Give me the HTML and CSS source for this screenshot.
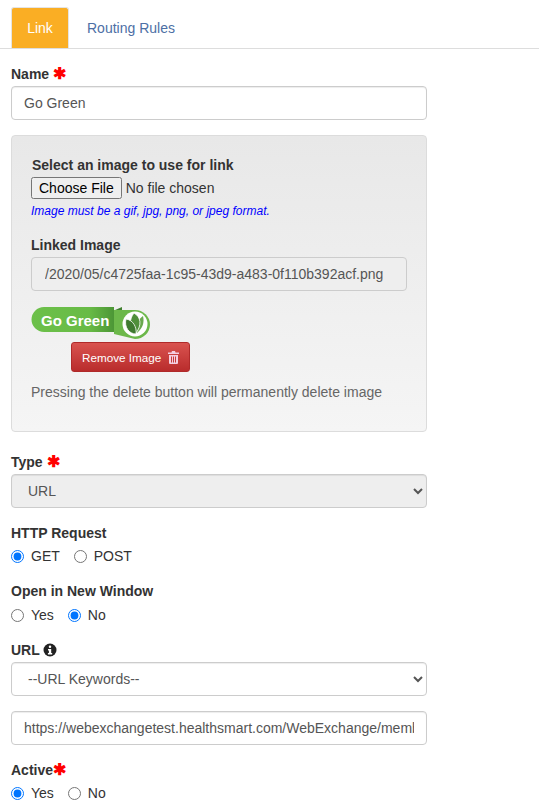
FILE: index.html
```html
<!DOCTYPE html>
<html lang="en">
<head>
<meta charset="utf-8">
<title>Link</title>
<link rel="stylesheet" href="styles.css">
</head>
<body>
<ul class="tabs">
  <li class="tab tab-active">Link</li>
  <li class="tab">Routing Rules</li>
</ul>
<form class="form">
  <div class="field field-name">
    <label class="label">Name <span class="req">✱</span></label>
    <input class="control" type="text" value="Go Green">
  </div>
  <div class="panel">
    <label class="label label-select">Select an image to use for link</label>
    <input class="file" type="file">
    <p class="hint">Image must be a gif, jpg, png, or jpeg format.</p>
    <label class="label label-linked">Linked Image</label>
    <input class="control control-path" type="text" readonly value="/2020/05/c4725faa-1c95-43d9-a483-0f110b392acf.png">
    <svg class="logo" width="120" height="36" viewBox="0 0 120 36" aria-label="Go Green logo">
      <defs>
        <linearGradient id="pill" x1="0" x2="1" y1="0" y2="0">
          <stop offset="0" stop-color="#6cc04a"/>
          <stop offset="0.7" stop-color="#68bb46"/>
          <stop offset="1" stop-color="#4c9636"/>
        </linearGradient>
      </defs>
      <path d="M13 1H83V26H13A12.500 12.500 0 0 1 13 1Z" fill="url(#pill)"/>
      <path d="M83 4.500L91 1V4.500Z" fill="#3f7f2e"/>
      <path d="M83 4H104A15 14.500 0 0 1 104 33L83 28Z" fill="#6cb84a"/>
      <circle cx="104" cy="18" r="12.500" fill="#fff"/>
      <path d="M112 10C113.500 16 112 22 106 27C104 21 106 14 112 10Z" fill="#6aa84f"/>
      <path d="M103 7C110 11 111 19 105 27C98 22 98 13 103 7Z" fill="#4f8f3a" stroke="#fff" stroke-width=".8"/>
      <path d="M95 13C102 14 106 21 105 28C98 28 93 21 95 13Z" fill="#3f7a30" stroke="#fff" stroke-width=".8"/>
      <text class="logo-text" x="10" y="20">Go Green</text>
    </svg>
    <button class="btn-remove" type="button">Remove Image
      <svg class="trash" width="11" height="13" viewBox="0 0 11 13"><path d="M4 0H7L7.500 1.500H11V3H0V1.500H3.500ZM1 4H10V12A1 1 0 0 1 9 13H2A1 1 0 0 1 1 12ZM3 5.500V11.500H4V5.500ZM5 5.500V11.500H6V5.500ZM7 5.500V11.500H8V5.500Z" fill="#f4cfe0" fill-rule="evenodd"/></svg>
    </button>
    <p class="note">Pressing the delete button will permanently delete image</p>
  </div>
  <div class="field field-type">
    <label class="label">Type <span class="req">✱</span></label>
    <select class="control control-select" disabled><option>URL</option></select>
  </div>
  <div class="field field-http">
    <label class="label">HTTP Request</label>
    <div class="radios">
      <label class="radio"><input type="radio" name="http" checked>GET</label>
      <label class="radio"><input type="radio" name="http">POST</label>
    </div>
  </div>
  <div class="field field-window">
    <label class="label">Open in New Window</label>
    <div class="radios">
      <label class="radio"><input type="radio" name="win">Yes</label>
      <label class="radio"><input type="radio" name="win" checked>No</label>
    </div>
  </div>
  <div class="field field-url">
    <label class="label">URL
      <svg class="info" width="14" height="14" viewBox="0 0 14 14"><circle cx="7" cy="7" r="6.500" fill="#222"/><rect x="5.800" y="2.500" width="2.400" height="2.400" rx="1" fill="#fff"/><path d="M5 6H8.200V10H9.200V11.500H4.900V10H5.900V7.400H5Z" fill="#fff"/></svg>
    </label>
    <select class="control control-select"><option>--URL Keywords--</option></select>
    <input class="control control-url" type="text" value="https://webexchangetest.healthsmart.com/WebExchange/member/login">
  </div>
  <div class="field field-active">
    <label class="label">Active<span class="req">✱</span></label>
    <div class="radios">
      <label class="radio"><input type="radio" name="active" checked>Yes</label>
      <label class="radio"><input type="radio" name="active">No</label>
    </div>
  </div>
</form>
</body>
</html>
```
FILE: styles.css
```css
* { box-sizing: border-box; }
html, body { height: 812px; overflow: hidden; }
body {
  margin: 0;
  background: #fff;
  color: #333;
  font-family: "Liberation Sans", Arial, sans-serif;
  font-size: 14px;
  line-height: 20px;
}
.tabs {
  display: flex;
  list-style: none;
  margin: 0;
  padding: 7px 0 0 11px;
  height: 49px;
  border-bottom: 1px solid #ddd;
}
.tab {
  height: 41px;
  padding: 11px 19px 0 18px;
  color: #4d6fa5;
  border-radius: 3px 3px 0 0;
}
.tab-active {
  width: 58px;
  padding: 10px 0 0;
  text-align: center;
  background: #faae24;
  color: #fff;
  border: 1px solid #e4e4e4;
  border-bottom: 0;
}
.form { width: 427px; padding-left: 11px; }
.label { display: block; font-weight: 700; color: #333; }
.req { color: #f00; font-size: 16px; line-height: 1; font-weight: 700; }
.control {
  display: block;
  width: 100%;
  height: 34px;
  padding: 6px 12px;
  border: 1px solid #ccc;
  border-radius: 4px;
  background: #fff;
  color: #555;
  font: 14px/20px "Liberation Sans", Arial, sans-serif;
  box-shadow: inset 0 1px 1px rgba(0,0,0,.075);
}
.field-name { padding-top: 15px; }
.field-name .label { margin-bottom: 2px; }
.panel {
  height: 297px;
  margin-top: 15px;
  padding: 19px 19px 0;
  background: linear-gradient(#e8e8e8, #f5f5f5);
  border: 1px solid #dcdcdc;
  border-radius: 4px;
}
.label-select { margin: 0 0 2px 1px; }
.file {
  display: block;
  font: 14px "Liberation Sans", Arial, sans-serif;
  color: #333;
  height: 23px;
}
.hint {
  margin: 3px 0 0;
  color: #00f;
  font-size: 12px;
  line-height: 16px;
  font-style: italic;
}
.label-linked { margin: 16px 0 2px; }
.control-path {
  background: #eee;
  padding-left: 13px;
  box-shadow: none;
}
.logo { display: block; margin: 15px 0 0; }
.logo-text { font: 700 15px "Liberation Sans", Arial, sans-serif; fill: #fff; }
.btn-remove {
  display: flex;
  align-items: center;
  justify-content: space-between;
  width: 119px;
  height: 30px;
  margin: 0 0 0 40px;
  padding: 0 10px;
  border: 1px solid #b02a2a;
  border-radius: 3px;
  background: linear-gradient(#d9534f, #b92c2c);
  color: #fff;
  font: 11.700px "Liberation Sans", Arial, sans-serif;
}
.note { margin: 10px 0 0; color: #666; }
.field-type { padding-top: 20px; }
.field-type .label { margin-bottom: 2px; }
.control-select:disabled { background: #eee; opacity: 1; color: #555; }
.field-http { padding-top: 15px; }
.field-window { padding-top: 15px; }
.radios { display: flex; gap: 14px; margin-top: 3px; }
.field-window .radios { margin-top: 4px; }
.radio { display: flex; align-items: center; gap: 7px; color: #333; }
.radio input { margin: 0; width: 13px; height: 13px; }
.field-url { padding-top: 15px; }
.field-url .label { display: flex; align-items: center; gap: 3px; margin-bottom: 2px; }
.control-url { margin-top: 15px; }
.field-active { padding-top: 15px; }
```
